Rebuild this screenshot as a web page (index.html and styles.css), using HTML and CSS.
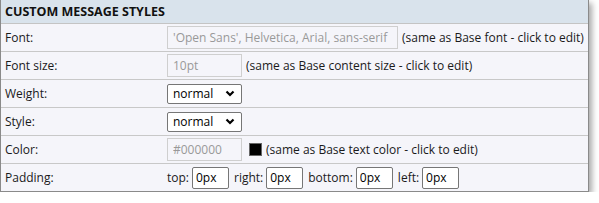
FILE: index.html
```html
<!DOCTYPE html>
<html lang="en">
<head>
    <meta charset="UTF-8">
    <title>Custom Message Styles</title>
    <link rel="stylesheet" href="styles.css">
</head>
<body>
    <div class="panel">
        <div class="panel-header">CUSTOM MESSAGE STYLES</div>
        <div class="row">
            <div class="label">Font:</div>
            <div class="field">
                <input class="text-input wide" type="text" value="'Open Sans', Helvetica, Arial, sans-serif" disabled>
                <span class="note">(same as Base font - click to edit)</span>
            </div>
        </div>
        <div class="row">
            <div class="label">Font size:</div>
            <div class="field">
                <input class="text-input" type="text" value="10pt" disabled>
                <span class="note">(same as Base content size - click to edit)</span>
            </div>
        </div>
        <div class="row">
            <div class="label">Weight:</div>
            <div class="field">
                <div class="select">normal
                    <svg class="chevron" width="10" height="7" viewBox="0 0 10 7"><path d="M1.5 1.5 L5 5 L8.5 1.5" fill="none" stroke="#000" stroke-width="2.2"/></svg>
                </div>
            </div>
        </div>
        <div class="row">
            <div class="label">Style:</div>
            <div class="field">
                <div class="select">normal
                    <svg class="chevron" width="10" height="7" viewBox="0 0 10 7"><path d="M1.5 1.5 L5 5 L8.5 1.5" fill="none" stroke="#000" stroke-width="2.2"/></svg>
                </div>
            </div>
        </div>
        <div class="row">
            <div class="label">Color:</div>
            <div class="field">
                <input class="text-input" type="text" value="#000000" disabled>
                <span class="swatch"></span>
                <span class="note">(same as Base text color - click to edit)</span>
            </div>
        </div>
        <div class="row">
            <div class="label">Padding:</div>
            <div class="field">
                <span class="pad-label">top:</span><input class="pad-input" type="text" value="0px">
                <span class="pad-label">right:</span><input class="pad-input" type="text" value="0px">
                <span class="pad-label">bottom:</span><input class="pad-input" type="text" value="0px">
                <span class="pad-label">left:</span><input class="pad-input" type="text" value="0px">
            </div>
        </div>
    </div>
</body>
</html>
```

FILE: styles.css
```css
body {
    margin: 0;
    background-color: #ffffff;
    font-family: "Open Sans", Arial, sans-serif;
    font-size: 12px;
    color: #1a1a1a;
}
.panel {
    width: 587px;
    border: 1px solid #8a8a8a;
    border-top: none;
    background-color: #f5f5fa;
    box-shadow: 3px 3px 6px rgba(0, 0, 0, 0.35);
}
.panel-header {
    height: 23px;
    line-height: 23px;
    padding-left: 4px;
    background-color: #d9e3ec;
    font-weight: bold;
    font-size: 12.5px;
    color: #111;
    border-bottom: 1px solid #c4c4c4;
}
.row {
    display: flex;
    align-items: center;
    height: 27px;
    border-bottom: 1px solid #c8c8c8;
}
.row:last-child {
    border-bottom: none;
}
.label {
    width: 162px;
    padding-left: 4px;
}
.field {
    display: flex;
    align-items: center;
}
.text-input {
    box-sizing: border-box;
    width: 75px;
    height: 23px;
    padding: 0 5px;
    border: 1px solid #cfcfcf;
    background-color: #f5f5fa;
    color: #999;
    font-family: inherit;
    font-size: 12px;
}
.text-input.wide {
    width: 231px;
}
.note {
    margin-left: 4px;
}
.swatch {
    width: 11px;
    height: 11px;
    margin-left: 7px;
    background-color: #000;
    border: 1px solid #666;
}
.select {
    box-sizing: border-box;
    width: 75px;
    height: 20px;
    padding: 0 6px 0 5px;
    display: flex;
    align-items: center;
    justify-content: space-between;
    border: 1px solid #767676;
    border-radius: 2px;
    background-color: #fff;
    color: #000;
}
.pad-label {
    margin-right: 3px;
}
.pad-input {
    box-sizing: border-box;
    width: 37px;
    height: 22px;
    margin-right: 5px;
    padding: 0 3px;
    border: 1px solid #767676;
    border-radius: 2px;
    background-color: #fff;
    color: #000;
    font-family: inherit;
    font-size: 12px;
}
```
